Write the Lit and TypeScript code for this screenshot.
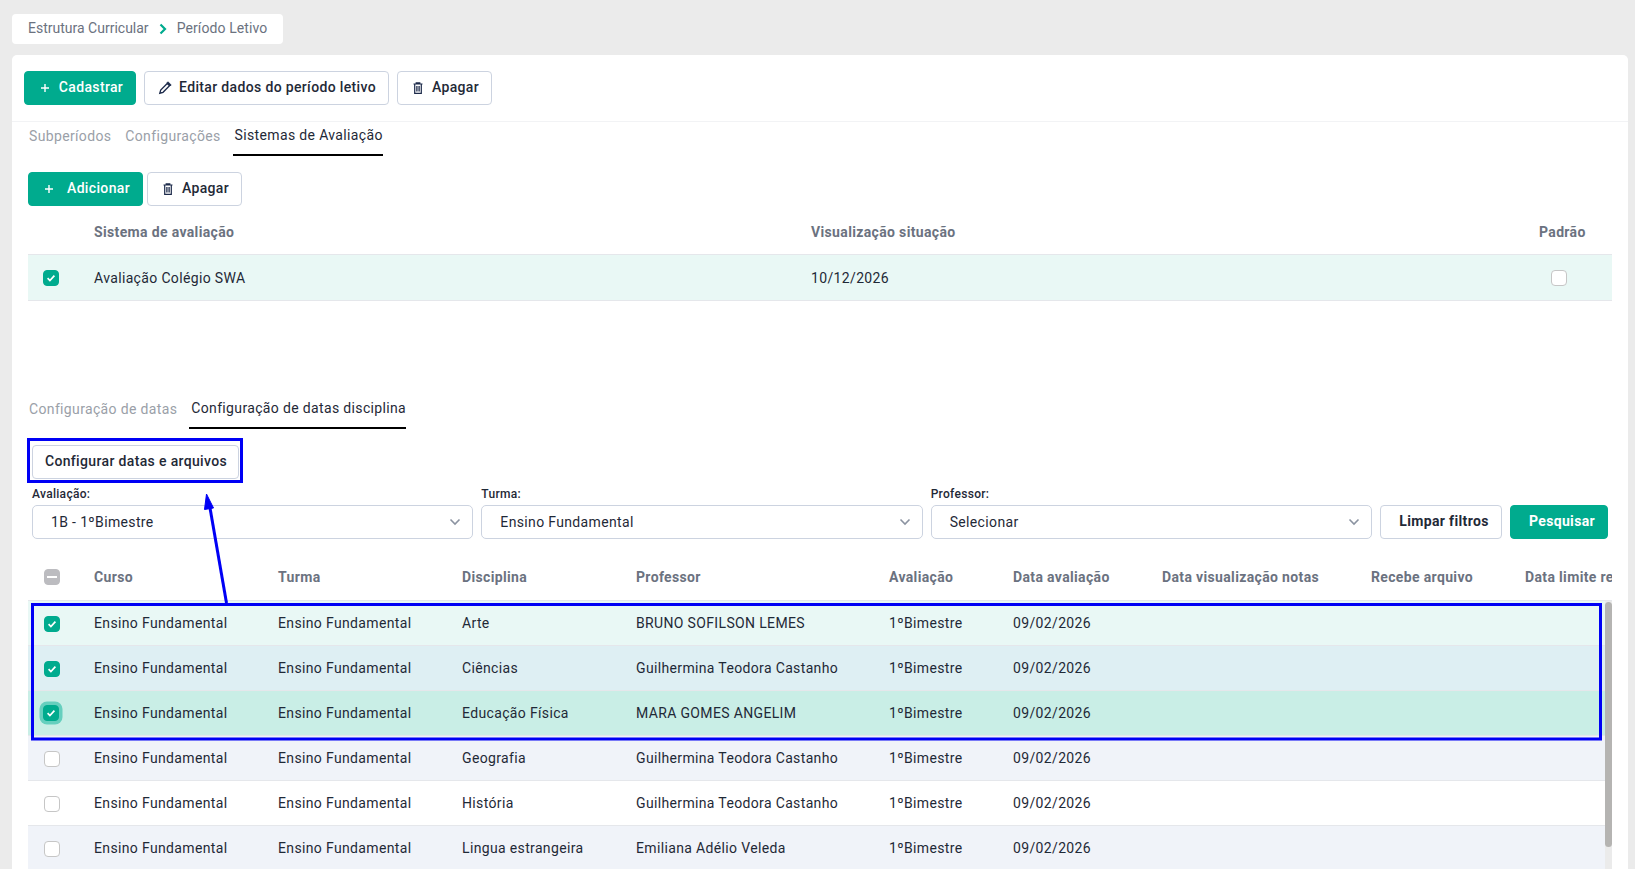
import { LitElement, html, css, svg } from "lit";
import { customElement } from "lit/decorators.js";

const rows = [
  ["Arte", "BRUNO SOFILSON LEMES", "r1", true],
  ["Ciências", "Guilhermina Teodora Castanho", "r2", true],
  ["Educação Física", "MARA GOMES ANGELIM", "r3", true],
  ["Geografia", "Guilhermina Teodora Castanho", "r4", false],
  ["História", "Guilhermina Teodora Castanho", "r5", false],
  ["Lingua estrangeira", "Emiliana Adélio Veleda", "r4", false],
] as const;

const plus = html`<svg class="ico" width="12" height="12" viewBox="0 0 12 12"><path d="M6 2v8M2 6h8" stroke="currentColor" stroke-width="1.4" fill="none"/></svg>`;
const trash = html`<svg class="ico" width="14" height="14" viewBox="0 0 14 14" fill="none" stroke="#1c2a4a" stroke-width="1.2"><path d="M2.5 3h9M5.2 3V1.8h3.6V3M3.7 3v9.4h6.6V3"/><path d="M5.9 5v5.5M8.1 5v5.5" stroke-width="1.3"/></svg>`;
const pencil = html`<svg class="ico" width="14" height="14" viewBox="0 0 14 14" fill="none" stroke="#1c2a4a" stroke-width="1.3"><path d="M1.8 12.2l.9-3.2L9.2 2.5l2.3 2.3L5 11.3z"/><path d="M9 1.8l1-1 3.2 3.2-1 1z" fill="#1c2a4a" stroke-width=".8"/></svg>`;
const chevron = html`<svg class="chev" width="12" height="8" viewBox="0 0 12 8" fill="none" stroke="#8b93a1" stroke-width="1.6"><path d="M1.5 1.5L6 6l4.5-4.5"/></svg>`;
const check = html`<svg width="10" height="10" viewBox="0 0 10 10" fill="none" stroke="#fff" stroke-width="1.7"><path d="M1.6 5.2l2.3 2.3 4.5-4.8"/></svg>`;

@customElement("app-root")
export class AppRoot extends LitElement {
  static styles = css`
    :host { display: block; position: relative; width: 1635px; height: 869px; overflow: hidden; background: #ebebeb;
      font-family: Roboto, "Liberation Sans", sans-serif; font-size: 14px; color: #1f2937; letter-spacing: .35px; }
    .page { display: flex; flex-direction: column; height: 869px; padding: 14px 7px 0 12px; box-sizing: border-box; }
    .crumb { display: flex; align-items: center; align-self: flex-start; box-sizing: border-box; width: 271px; height: 30px; padding: 0 0 2px 16px;
      background: #fff; border-radius: 4px; color: #6b7280; margin-bottom: 11px; letter-spacing: 0; }
    .crumb svg { margin: 2px 10px 0 10px; }
    .crumb .cur { letter-spacing: .1px; }
    .card { flex: 1; background: #fff; border-radius: 5px 5px 0 0; min-height: 0; }
    .toolbar { display: flex; gap: 8px; padding: 16px 12px; height: 67px; box-sizing: border-box; border-bottom: 1px solid #f2f3f5; }
    .content { padding: 0 16px; }
    .btn { display: inline-flex; align-items: center; justify-content: center; box-sizing: border-box; height: 34px; border-radius: 4px; font-weight: 500;
      border: 1px solid #ccd3e0; background: #fff; color: #1f2937; gap: 7px; padding: 0 0 3px 1px; }
    .btn .ico { margin-top: 3px; }
    .btn.primary { background: #00ab8e; border-color: #00ab8e; color: #fff; gap: 8px; padding-left: 2px; }
    .w112 { width: 112px; } .w245 { width: 245px; } .w95 { width: 95px; } .btn.w115 { width: 115px; gap: 12px; } .w207 { width: 207px; }
    .btn.strong { font-weight: 700; padding-left: 6px; }
    .w122 { width: 122px; } .w98 { width: 98px; }
    .tabs { display: flex; height: 34px; align-items: stretch; gap: 12px; }
    .tab { display: flex; align-items: center; padding: 0 1px 6px; box-sizing: border-box; color: #9aa0a8; }
    .tab.active { color: #1f2937; border-bottom: 2px solid #000; padding: 0 0 6px 2px; margin-left: -1px; }
    .actions { display: flex; gap: 4px; margin-top: 16px; }
    .t1 { display: grid; grid-template-columns: 66px 717px 728px 1fr; align-items: center; }
    .h { height: 45px; box-sizing: border-box; border-bottom: 1px solid #e5e7eb; font-weight: 700; color: #6b7280; display: grid; align-items: center; white-space: nowrap; }
    .h.hdr1 { height: 49px; padding-top: 4px; }
    .row { height: 45px; box-sizing: border-box; border-bottom: 1px solid #e5e7eb; display: grid; align-items: center; white-space: nowrap; }
    .row.t1 { height: 46px; }
    .r1 { background: #e9f8f5; } .r2 { background: #deeff3; } .r3 { background: #c9eee6; } .r4 { background: #f0f3f9; } .r5 { background: #fff; }
    .cb { display: block; width: 16px; height: 16px; box-sizing: border-box; border-radius: 4px; border: 1px solid #c6c6c6; background: #fff; }
    .cb.on { background: #00ab8e; border-color: #00ab8e; display: flex; align-items: center; justify-content: center; }
    .cb.ind { background: #bcbcc0; border-color: #bcbcc0; display: flex; align-items: center; justify-content: center; }
    .cb.ind i { display: block; width: 10px; height: 2px; background: #fff; }
    .cb.focus { box-shadow: 0 0 0 3.5px #66cfbe; margin-left: -1px; }
    .rows .cb:not(.focus) { margin-top: 2px; }
    .cbcell { padding-left: 16px; }
    .cbcell.first { padding-left: 15px; }
    .pad { padding-left: 12px; }
    .sec2 { margin-top: 94px; }
    .cfg { margin: 16px 0 0 4px; display: flex; }
    .filters { display: flex; gap: 8px; align-items: flex-end; padding: 8px 4px 0; }
    .field { flex: 1; min-width: 0; }
    .field label { display: block; height: 18px; line-height: 14px; font-size: 12px; font-weight: 500; letter-spacing: .3px; }
    .select { display: flex; align-items: center; justify-content: space-between; box-sizing: border-box; height: 34px; border: 1px solid #ccd3e0; border-radius: 5px; padding: 0 11px 0 18px; }
    .t2wrap { margin-top: 16px; width: 1584px; overflow: hidden; }
    .t2 { grid-template-columns: 66px 184px 184px 174px 253px 124px 149px 209px 154px 400px; }
    .t2h { width: 1584px; overflow: hidden; }
    .t2h .h { width: 1900px; height: 46px; padding-bottom: 1px; }
    .body { display: flex; height: 269px; }
    .rows { width: 1577px; overflow: hidden; flex: none; }
    .rows .row { width: 1900px; }
    .sb { width: 7px; flex: none; background: #ebebeb; }
    .thumb { height: 245px; margin-top: 1px; background: #b5b4b2; border-radius: 4px; }
    .overlay { position: absolute; left: 0; top: 0; pointer-events: none; }
  `;

  private table2() {
    return html`
      <div class="t2wrap">
        <div class="t2h">
          <div class="h t2">
            <span class="cbcell"><span class="cb ind"><i></i></span></span>
            <span>Curso</span><span>Turma</span><span>Disciplina</span><span>Professor</span>
            <span>Avaliação</span><span>Data avaliação</span><span>Data visualização notas</span>
            <span>Recebe arquivo</span><span>Data limite recebimento</span>
          </div>
        </div>
        <div class="body">
          <div class="rows">
            ${rows.map(([d, p, cl, on], i) => html`
              <div class="row t2 ${cl}">
                <span class="cbcell">
                  <span class="cb ${on ? "on" : ""} ${i === 2 ? "focus" : ""}">${on ? check : ""}</span>
                </span>
                <span>Ensino Fundamental</span><span>Ensino Fundamental</span><span>${d}</span><span>${p}</span>
                <span>1ºBimestre</span><span>09/02/2026</span><span></span><span></span><span></span>
              </div>`)}
          </div>
          <div class="sb"><div class="thumb"></div></div>
        </div>
      </div>`;
  }

  render() {
    return html`
      <div class="page">
        <div class="crumb">
          <span>Estrutura Curricular</span>
          <svg width="8" height="12" viewBox="0 0 8 12" fill="none" stroke="#00ab8e" stroke-width="2.2"><path d="M1.5 1.5L6 6l-4.5 4.5"/></svg>
          <span class="cur">Período Letivo</span>
        </div>
        <div class="card">
          <div class="toolbar">
            <div class="btn primary w112">${plus}<span>Cadastrar</span></div>
            <div class="btn w245">${pencil}<span>Editar dados do período letivo</span></div>
            <div class="btn w95">${trash}<span>Apagar</span></div>
          </div>
          <div class="content">
            <div class="tabs">
              <div class="tab">Subperíodos</div>
              <div class="tab">Configurações</div>
              <div class="tab active">Sistemas de Avaliação</div>
            </div>
            <div class="actions">
              <div class="btn primary w115">${plus}<span>Adicionar</span></div>
              <div class="btn w95">${trash}<span>Apagar</span></div>
            </div>
            <div class="h t1 hdr1">
              <span></span><span>Sistema de avaliação</span><span>Visualização situação</span><span>Padrão</span>
            </div>
            <div class="row t1 r1">
              <span class="cbcell first"><span class="cb on">${check}</span></span>
              <span>Avaliação Colégio SWA</span><span>10/12/2026</span>
              <span class="pad"><span class="cb"></span></span>
            </div>
            <div class="sec2">
              <div class="tabs">
                <div class="tab">Configuração de datas</div>
                <div class="tab active">Configuração de datas disciplina</div>
              </div>
              <div class="cfg"><div class="btn w207">Configurar datas e arquivos</div></div>
              <div class="filters">
                <div class="field"><label>Avaliação:</label><div class="select"><span>1B - 1ºBimestre</span>${chevron}</div></div>
                <div class="field"><label>Turma:</label><div class="select"><span>Ensino Fundamental</span>${chevron}</div></div>
                <div class="field"><label>Professor:</label><div class="select"><span>Selecionar</span>${chevron}</div></div>
                <div class="btn w122 strong">Limpar filtros</div>
                <div class="btn primary w98 strong">Pesquisar</div>
              </div>
              ${this.table2()}
            </div>
          </div>
        </div>
      </div>
      <svg class="overlay" width="1635" height="869" viewBox="0 0 1635 869">
        ${svg`
          <rect x="28.5" y="439.5" width="213" height="42" fill="none" stroke="#0000f5" stroke-width="3"/>
          <rect x="32.5" y="604.5" width="1568" height="134.5" fill="none" stroke="#0000f5" stroke-width="3"/>
          <path d="M226.5 603L209.5 505" stroke="#0000f5" stroke-width="3" fill="none"/>
          <path d="M206.5 494L213.5 508L204.5 509.5Z" fill="#0000f5" stroke="#0000f5"/>
        `}
      </svg>
    `;
  }
}
